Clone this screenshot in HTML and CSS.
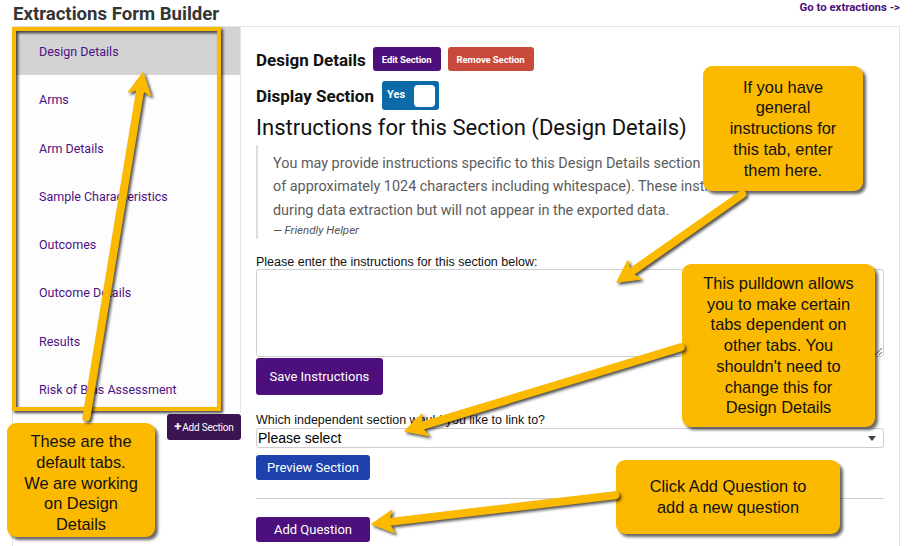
FILE: index.html
```html
<!DOCTYPE html>
<html lang="en">
<head>
<meta charset="utf-8">
<title>Extractions Form Builder</title>
<link rel="stylesheet" href="styles.css">
</head>
<body>
<header class="topbar">
  <h1 class="title">Extractions Form Builder</h1>
  <a class="goto" href="#">Go to extractions -&gt;</a>
</header>

<div class="panel">
  <aside class="sidebar">
    <ul class="tabs">
      <li class="tab active">Design Details</li>
      <li class="tab">Arms</li>
      <li class="tab">Arm Details</li>
      <li class="tab">Sample Characteristics</li>
      <li class="tab">Outcomes</li>
      <li class="tab">Outcome Details</li>
      <li class="tab">Results</li>
      <li class="tab">Risk of Bias Assessment</li>
    </ul>
    <div class="add-row">
      <button class="btn-add-section"><span class="plus">+</span>Add Section</button>
    </div>
  </aside>

  <main class="content">
    <div class="row-title">
      <h2 class="section-name">Design Details</h2>
      <button class="btn-sm btn-purple">Edit Section</button>
      <button class="btn-sm btn-red">Remove Section</button>
    </div>
    <div class="row-display">
      <h2 class="section-name">Display Section</h2>
      <div class="toggle"><span class="toggle-label">Yes</span><span class="knob"></span></div>
    </div>
    <h3 class="instr-title">Instructions for this Section (Design Details)</h3>
    <blockquote class="quote">
      <p>You may provide instructions specific to this Design Details section (with a maximum length<br>of approximately 1024 characters including whitespace). These instructions will be visible during data extraction but will not appear in the exported data.</p>
      <footer>— Friendly Helper</footer>
    </blockquote>
    <label class="field-label">Please enter the instructions for this section below:</label>
    <textarea class="instr-input"></textarea>
    <button class="btn btn-purple btn-save">Save Instructions</button>
    <label class="field-label link-label">Which independent section would you like to link to?</label>
    <div class="select-wrap">
      <select class="link-select"><option>Please select</option></select>
    </div>
    <button class="btn btn-blue btn-wide btn-preview">Preview Section</button>
    <hr class="divider">
    <button class="btn btn-purple btn-wide">Add Question</button>
  </main>
</div>

<div class="annotations">
  <div class="tab-outline"></div>
  <div class="callout callout-instr">If you have<br>general<br>instructions for<br>this tab, enter<br>them here.</div>
  <div class="callout callout-pulldown">This pulldown allows<br>you to make certain<br>tabs dependent on<br>other tabs. You<br>shouldn't need to<br>change this for<br>Design Details</div>
  <div class="callout callout-question">Click Add Question to<br>add a new question</div>
  <div class="callout callout-tabs">These are the<br>default tabs.<br>We are working<br>on Design<br>Details</div>
  <svg class="arrows" width="915" height="546" viewBox="0 0 915 546">
    <g transform="translate(143 73) rotate(-80.67)">
      <line x1="-349" y1="0" x2="-14" y2="0"/>
      <path d="M0 0 L-21 -11 L-16 0 L-21 11 Z"/>
    </g>
    <g transform="translate(617 282) rotate(144.98)">
      <line x1="-153" y1="0" x2="-14" y2="0"/>
      <path d="M0 0 L-21 -11 L-16 0 L-21 11 Z"/>
    </g>
    <g transform="translate(405 431) rotate(163.13)">
      <line x1="-288" y1="0" x2="-14" y2="0"/>
      <path d="M0 0 L-21 -11 L-16 0 L-21 11 Z"/>
    </g>
    <g transform="translate(372 524) rotate(173.25)">
      <line x1="-245" y1="0" x2="-14" y2="0"/>
      <path d="M0 0 L-21 -11 L-16 0 L-21 11 Z"/>
    </g>
  </svg>
</div>
</body>
</html>
```

FILE: styles.css
```css
* { box-sizing: border-box; }

html, body {
  margin: 0;
  background: #ffffff;
}

body {
  position: relative;
  width: 915px;
  height: 546px;
  overflow: hidden;
  padding: 0 0 0 12px;
  font-family: Roboto, "Liberation Sans", sans-serif;
  color: #111;
}

/* ---------- top bar ---------- */
.topbar {
  width: 888px;
  height: 26px;
  display: flex;
  justify-content: space-between;
  align-items: flex-start;
}

.title {
  margin: 3px 0 0 1px;
  font-size: 18.6px;
  line-height: 22px;
  font-weight: 700;
  color: #353535;
}

.goto {
  margin-top: 1px;
  font-size: 11.4px;
  line-height: 13px;
  font-weight: 700;
  color: #4b0d78;
  text-decoration: none;
}

/* ---------- panel ---------- */
.panel {
  width: 888px;
  min-height: 540px;
  display: flex;
  border: 1px solid #e4e4e4;
  border-bottom: none;
}

.sidebar {
  width: 228px;
  flex: none;
}

.tabs {
  list-style: none;
  margin: 0;
  padding: 0;
  border-right: 1px solid #e4e4e4;
  background: #fdfdfd;
}

.tab {
  padding: 17px 0 15px 26px;
  font-size: 12.5px;
  line-height: 16.3px;
  color: #4c1184;
}

.tab.active {
  background: #d3d3d3;
}

.add-row {
  display: flex;
  justify-content: flex-end;
  padding-top: 1px;
}

.btn-add-section {
  width: 74px;
  height: 26px;
  padding: 0;
  border: 0;
  border-radius: 3px;
  background: #3b1452;
  color: #fff;
  font-family: Roboto, sans-serif;
  font-size: 10px;
  letter-spacing: -0.2px;
  display: flex;
  align-items: center;
  justify-content: center;
}

.plus {
  font-size: 13px;
  font-weight: 700;
  margin-right: 1px;
  line-height: 10px;
}

/* ---------- content ---------- */
.content {
  flex: 1;
  padding: 20px 15px 0 15px;
  display: flex;
  flex-direction: column;
  align-items: flex-start;
}

.row-title,
.row-display {
  display: flex;
  align-items: center;
}

.row-display {
  margin-top: 10px;
}

.section-name {
  margin: 0;
  font-size: 17px;
  line-height: 20px;
  font-weight: 700;
  color: #111;
  padding-top: 1px;
}

.btn-sm {
  height: 24px;
  padding: 0 9px;
  margin-left: 7px;
  border: 0;
  border-radius: 3px;
  color: #fff;
  font-family: Roboto, sans-serif;
  font-size: 9.5px;
  font-weight: 700;
  letter-spacing: -0.1px;
}

.btn-purple { background: #4d0f7b; }
.btn-red { background: #c94a3b; }
.btn-blue { background: #1f41ad; }

.toggle {
  width: 57px;
  height: 29px;
  margin-left: 8px;
  border-radius: 3px;
  background: #0b6aa7;
  display: flex;
  align-items: center;
  justify-content: space-between;
  padding: 0 4px 0 5px;
}

.toggle-label {
  color: #fff;
  font-size: 11px;
  font-weight: 700;
  margin-top: -2px;
}

.knob {
  width: 21px;
  height: 22px;
  border-radius: 4px;
  background: #fff;
}

.instr-title {
  margin: 5px 0 0 0;
  font-size: 22px;
  line-height: 26px;
  font-weight: 400;
  color: #111;
}

.quote {
  margin: 4px 0 0 0;
  padding: 7px 20px 1px 15px;
  border-left: 2px solid #dedede;
  width: 100%;
}

.quote p {
  margin: 0;
  font-size: 14.4px;
  line-height: 23.3px;
  color: #5c5c5c;
}

.quote footer {
  font-size: 11.5px;
  line-height: 16px;
  font-style: italic;
  color: #555;
}

.field-label {
  margin-top: 17px;
  font-family: "Liberation Sans", Arial, sans-serif;
  font-size: 12.5px;
  line-height: 13px;
  color: #111;
}

.link-label {
  margin-top: 19px;
}

.instr-input {
  display: block;
  width: 100%;
  height: 88px;
  margin: 0;
  border: 1px solid #cfcfcf;
  border-radius: 3px;
  background: #fff;
  resize: vertical;
}

.btn {
  height: 24px;
  padding: 0 13px;
  border: 0;
  border-radius: 3px;
  color: #fff;
  font-family: Roboto, sans-serif;
  font-size: 13px;
}

.btn-save {
  height: 37px;
  margin-top: 1px;
  padding: 0 13.5px;
}

.btn-wide {
  width: 114px;
  height: 25px;
  padding: 0;
}

.btn-preview {
  margin-top: 7px;
}

.select-wrap {
  position: relative;
  width: 100%;
  margin-top: 1px;
}

.select-wrap::after {
  content: "";
  position: absolute;
  right: 8px;
  top: 8px;
  border-left: 4px solid transparent;
  border-right: 4px solid transparent;
  border-top: 5px solid #444;
}

.link-select {
  -webkit-appearance: none;
  appearance: none;
  display: block;
  width: 100%;
  height: 20px;
  margin: 0;
  padding: 0 0 0 1px;
  border: 1px solid #cfcfcf;
  border-radius: 3px;
  background: #fff;
  font-family: "Liberation Sans", Arial, sans-serif;
  font-size: 14px;
  line-height: 18px;
  color: #000;
}

.divider {
  width: 100%;
  margin: 18px 0;
  border: 0;
  border-top: 1px solid #cccccc;
}

/* ---------- annotations ---------- */
.annotations {
  position: absolute;
  left: 0;
  top: 0;
  width: 915px;
  height: 546px;
  pointer-events: none;
}

.tab-outline {
  position: absolute;
  left: 12px;
  top: 27px;
  width: 209px;
  height: 384px;
  border: 4px solid #fbb900;
  filter: drop-shadow(2px 2px 1.5px rgba(0, 0, 0, 0.75));
}

.callout {
  position: absolute;
  background: #fbb900;
  border-radius: 9px;
  box-shadow: 3px 3px 3px rgba(0, 0, 0, 0.6);
  display: flex;
  align-items: center;
  justify-content: center;
  text-align: center;
  font-family: "Liberation Sans", Arial, sans-serif;
  font-size: 16.4px;
  line-height: 20.7px;
  color: #111;
}

.callout-instr {
  left: 703px;
  top: 66px;
  width: 160px;
  height: 125px;
}

.callout-pulldown {
  left: 682px;
  top: 264px;
  width: 193px;
  height: 163px;
}

.callout-question {
  left: 616px;
  top: 460px;
  width: 224px;
  height: 74px;
}

.callout-tabs {
  left: 7px;
  top: 423px;
  width: 148px;
  height: 114px;
  padding-top: 6px;
}

.arrows {
  position: absolute;
  left: 0;
  top: 0;
  filter: drop-shadow(2px 2px 1.5px rgba(0, 0, 0, 0.7));
}

.arrows line {
  stroke: #fbb900;
  stroke-width: 8;
  stroke-linecap: round;
}

.arrows path {
  fill: #fbb900;
  stroke: #fbb900;
  stroke-width: 1.5;
  stroke-linejoin: round;
}
```
